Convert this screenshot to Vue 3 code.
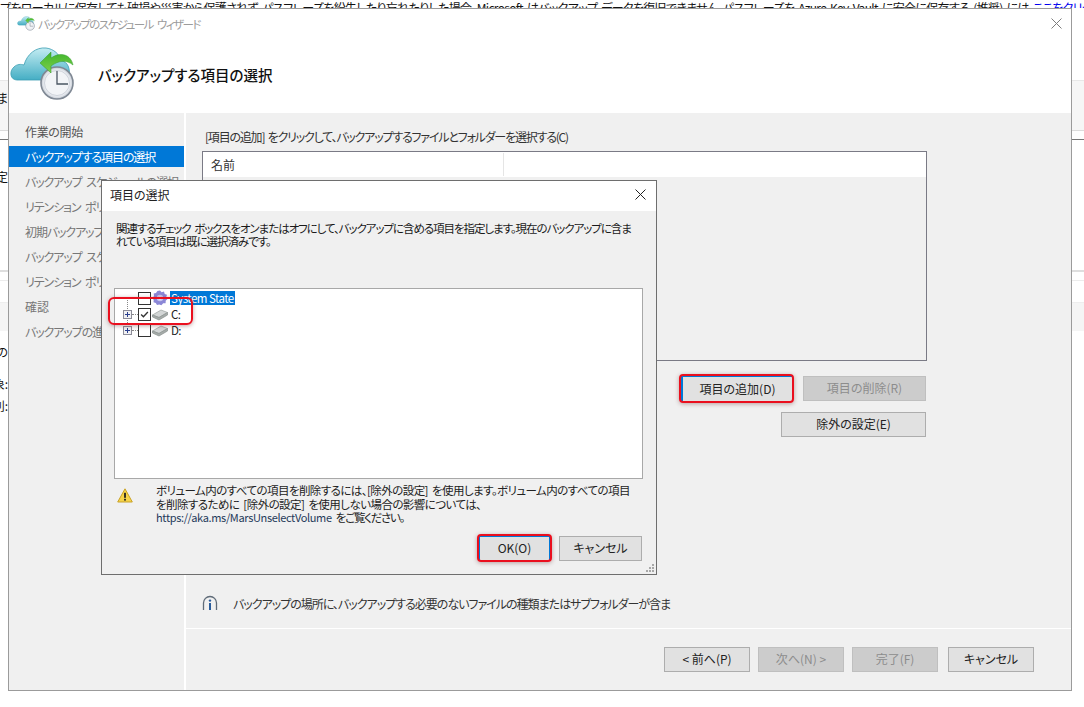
<script setup>
const steps = [
  { label: '作業の開始', tone: 'done' },
  { label: 'バックアップする項目の選択', tone: 'active' },
  { label: 'バックアップ スケジュールの選択', tone: '' },
  { label: 'リテンション ポリシーの選択', tone: '' },
  { label: '初期バックアップの種類', tone: '' },
  { label: 'バックアップ スケジュール', tone: '' },
  { label: 'リテンション ポリシー', tone: '' },
  { label: '確認', tone: 'plain' },
  { label: 'バックアップの進行状況', tone: '' }
]
const rows = [
  { label: 'System State', kind: 'gear', expand: false, checked: false, selected: true },
  { label: 'C:', kind: 'drive', expand: true, checked: true, selected: false },
  { label: 'D:', kind: 'drive', expand: true, checked: false, selected: false }
]
</script>

<template>
  <div class="screen">
    <svg class="defs" width="0" height="0" aria-hidden="true">
      <defs>
        <linearGradient id="cloudFill" x1="0" y1="0" x2="0" y2="1">
          <stop offset="0" stop-color="#c3ecf2" />
          <stop offset="1" stop-color="#45aec4" />
        </linearGradient>
        <linearGradient id="arrowFill" x1="0" y1="0" x2="0" y2="1">
          <stop offset="0" stop-color="#3fb52c" />
          <stop offset="1" stop-color="#7fd04a" />
        </linearGradient>
        <radialGradient id="clockFace" cx="0.5" cy="0.5" r="0.55">
          <stop offset="0" stop-color="#ffffff" />
          <stop offset="0.75" stop-color="#e8ebf0" />
          <stop offset="1" stop-color="#aab2bd" />
        </radialGradient>
        <symbol id="wizardIcon" viewBox="0 0 66 54">
          <path d="M8 33 C1 33 0 24 5 20 C8 17 12 17 15 18 C18 7 27 0 37 1 C45 2 50 7 53 14 C58 15 62 20 60 33 Z" fill="url(#cloudFill)" stroke="#3a9db3" stroke-width="0.8" />
          <circle cx="48" cy="36" r="16" fill="url(#clockFace)" stroke="#7f8894" stroke-width="1.6" />
          <circle cx="48" cy="36" r="12.5" fill="#f2f4f7" stroke="#c6ccd4" stroke-width="0.8" />
          <path d="M48 24 V37 H59" fill="none" stroke="#4a5563" stroke-width="1.3" />
          <path d="M64 18 C62 8 52 4 42 11 V5 L31 16 L42 26 V19 C50 13 58 13 64 18 Z" fill="url(#arrowFill)" stroke="#2f9a26" stroke-width="0.5" />
        </symbol>
      </defs>
    </svg>

    <div class="page">
      <div class="page-notice">
        <span>プをローカルに保存しても破損や災害から保護されず、パスフレーズを紛失したり忘れたりした場合、Microsoft はバックアップ データを復旧できません。パスフレーズを Azure Key Vault に安全に保存する (推奨) には</span> <span class="page-link">ここをクリック</span>
      </div>
      <div class="page-band"><span class="page-cut">しま</span></div>
      <div class="page-rule"></div>
      <div class="page-text-a"><span class="page-cut">設定</span></div>
      <div class="page-light"></div>
      <div class="page-band-b"></div>
      <div class="page-text-b"><span class="page-cut">初回の</span></div>
      <div class="page-text-c"><span class="page-cut">対象:</span></div>
      <div class="page-text-d"><span class="page-cut">除外列:</span></div>
    </div>

    <section class="wizard">
      <header class="wizard-title">
        <svg class="title-icon"><use href="#wizardIcon" /></svg>
        <span>バックアップのスケジュール ウィザード</span>
        <svg class="wizard-close" viewBox="0 0 11 11"><path d="M0.5 0.5 L10.5 10.5 M10.5 0.5 L0.5 10.5" /></svg>
      </header>
      <div class="wizard-head">
        <svg class="head-icon"><use href="#wizardIcon" /></svg>
        <h1>バックアップする項目の選択</h1>
      </div>
      <div class="wizard-body">
        <nav class="steps">
          <div v-for="s in steps" :key="s.label" class="step" :class="s.tone">{{ s.label }}</div>
        </nav>
        <main class="main">
          <div class="main-inner">
            <p class="prompt">[項目の追加] をクリックして、バックアップするファイルとフォルダーを選択する(C)</p>
            <div class="list">
              <div class="list-head">
                <div class="col-name">名前</div>
                <div class="col-rest"></div>
              </div>
            </div>
            <div class="btn-row first">
              <button class="btn focus add">項目の追加(D)</button>
              <button class="btn off remove">項目の削除(R)</button>
            </div>
            <div class="btn-row second">
              <button class="btn exclude">除外の設定(E)</button>
            </div>
            <div class="info">
              <svg class="info-icon" viewBox="0 0 16 16">
                <path d="M1.5 15 V8 A6.5 6.5 0 0 1 14.5 8 V15" fill="none" stroke="#5f6b78" stroke-width="1.3" />
                <circle cx="8" cy="5.6" r="1.2" fill="#2a5d9c" />
                <rect x="7" y="8" width="2" height="7" fill="#2a5d9c" />
              </svg>
              <span>バックアップの場所に、バックアップする必要のないファイルの種類またはサブフォルダーが含ま</span>
            </div>
          </div>
          <footer class="foot">
            <button class="btn nav">&lt; 前へ(P)</button>
            <button class="btn nav off">次へ(N) &gt;</button>
            <button class="btn nav off">完了(F)</button>
            <button class="btn nav cancel">キャンセル</button>
          </footer>
        </main>
      </div>
    </section>

    <section class="dialog">
      <header class="dialog-title">
        <span>項目の選択</span>
        <svg class="dialog-close" viewBox="0 0 11 11"><path d="M0.5 0.5 L10.5 10.5 M10.5 0.5 L0.5 10.5" /></svg>
      </header>
      <div class="dialog-body">
        <p class="dialog-text">関連するチェック ボックスをオンまたはオフにして、バックアップに含める項目を指定します。現在のバックアップに含ま<br />れている項目は既に選択済みです。</p>
        <div class="tree">
          <span class="tree-line"></span>
          <div v-for="r in rows" :key="r.label" class="tree-row">
            <span class="expander">
              <svg v-if="r.expand" viewBox="0 0 9 9"><rect x="0.5" y="0.5" width="8" height="8" fill="#f1f1f4" stroke="#8c8c98" /><path d="M2 4.5 H7 M4.5 2 V7" stroke="#2a3f8f" /></svg>
              <span v-else class="stub"></span>
            </span>
            <span class="dots"></span>
            <span class="check">
              <svg v-if="r.checked" viewBox="0 0 13 13"><path d="M2.5 6.5 L5.2 9.2 L10.5 3.5" fill="none" stroke="#333" stroke-width="1.6" /></svg>
            </span>
            <svg v-if="r.kind === 'gear'" class="row-icon" viewBox="0 0 16 16">
              <path d="M8 .5 L9.6 2.2 L12 1.6 L12.7 3.9 L15 4.8 L14.2 7.2 L15.5 9 L13.7 10.8 L13.6 13.2 L11.2 13.3 L9.4 15.2 L7.2 14.4 L5 15 L3.8 12.9 L1.5 12.3 L1.7 9.9 L.5 8 L2 6 L1.7 3.6 L4 3 L5.4 1 Z" fill="#8b87d6" />
              <circle cx="8" cy="8" r="3.2" fill="#c8c7ee" />
              <circle cx="8" cy="8" r="1.6" fill="#f3f3fb" />
            </svg>
            <svg v-else class="row-icon" viewBox="0 0 16 16">
              <path d="M0.5 9 L9 4 L15.5 6.5 L7 11.5 Z" fill="#d3d6d6" stroke="#9aa09e" stroke-width="0.7" />
              <path d="M0.5 9 V11 L7 14 L15.5 9 V6.5 L7 11.5 Z" fill="#a6acaa" stroke="#8a908e" stroke-width="0.7" />
            </svg>
            <span class="row-label" :class="{ selected: r.selected }">{{ r.label }}</span>
          </div>
        </div>
        <div class="warning">
          <svg class="warn-icon" viewBox="0 0 16 15">
            <path d="M8 0.8 L15.3 14 H0.7 Z" fill="#f6d44a" stroke="#c9a227" stroke-linejoin="round" />
            <rect x="7.1" y="4.8" width="1.8" height="5" fill="#222" />
            <rect x="7.1" y="10.8" width="1.8" height="1.8" fill="#222" />
          </svg>
          <p>ボリューム内のすべての項目を削除するには、[除外の設定] を使用します。ボリューム内のすべての項目<br />を削除するために [除外の設定] を使用しない場合の影響については、<br /><span class="url">https://aka.ms/MarsUnselectVolume</span> <span class="tail">をご覧ください。</span></p>
        </div>
        <div class="dialog-actions">
          <button class="btn focus ok">OK(O)</button>
          <button class="btn dialog-cancel">キャンセル</button>
        </div>
        <svg class="grip" viewBox="0 0 10 10">
          <g fill="#a8a8a8"><rect x="7" y="1" width="2" height="2" /><rect x="4" y="4" width="2" height="2" /><rect x="7" y="4" width="2" height="2" /><rect x="1" y="7" width="2" height="2" /><rect x="4" y="7" width="2" height="2" /><rect x="7" y="7" width="2" height="2" /></g>
        </svg>
      </div>
    </section>

    <div class="mark mark-tree"></div>
    <div class="mark mark-add"></div>
    <div class="mark mark-ok"></div>
  </div>
</template>

<style>
html, body { margin: 0; background: #fff; }
</style>

<style scoped>
.screen {
  position: relative;
  width: 1084px;
  height: 707px;
  overflow: hidden;
  background: #fff;
  font-family: "Noto Sans CJK JP", "Noto Sans", sans-serif;
  font-feature-settings: "palt";
  font-size: 12px;
  color: #1a1a1a;
}
.defs { position: absolute; }
p, h1 { margin: 0; }

/* page behind the wizard */
.page { display: flex; flex-direction: column; width: 100%; }
.page-notice {
  height: 8px;
  overflow: hidden;
  white-space: nowrap;
  line-height: 16px;
  font-size: 12px;
  letter-spacing: -0.68px;
  word-spacing: 2px;
  color: #111;
}
.page-link { color: #0000ee; text-decoration: underline; }
.page-band {
  height: 51px;
  margin-top: 72px;
  background: #f6f6f6;
  border-top: 1px solid #e8e8e8;
  border-bottom: 1px solid #dcdcdc;
  box-sizing: border-box;
  padding-top: 9px;
}
.page-cut { display: flex; justify-content: flex-end; line-height: 16px; width: 8px; white-space: nowrap; color: #111; }
.page-rule { height: 1px; margin-top: 8px; background: #777; }
.page-text-a { height: 132px; padding-top: 29px; box-sizing: border-box; border-bottom: 2px solid #dedede; }
.page-light { height: 1px; margin-top: 8px; background: #ececec; }
.page-band-b { height: 29px; margin-top: 21px; background: #f5f5f5; border-top: 1px solid #eee; box-sizing: border-box; }
.page-text-b { margin-top: 13px; height: 16px; }
.page-text-c { margin-top: 16px; height: 16px; }
.page-text-d { margin-top: 6px; height: 16px; }

/* wizard window */
.wizard {
  position: absolute;
  left: 8px;
  top: 8px;
  width: 1064px;
  height: 683px;
  box-sizing: border-box;
  border: 1px solid #9b9b9b;
  background: #fff;
  display: flex;
  flex-direction: column;
}
.wizard-title {
  height: 29px;
  flex: none;
  display: flex;
  align-items: center;
  padding: 0 9px 0 8px;
  color: #9c9c9c;
  font-size: 11.5px;
  letter-spacing: -1.55px;
  word-spacing: 3px;
}
.title-icon { width: 18px; height: 15px; margin-right: 3px; flex: none; }
.wizard-close { width: 11px; height: 11px; margin-left: auto; margin-right: 0; fill: none; stroke: #7d7d7d; stroke-width: 1; }
.wizard-head {
  height: 75px;
  flex: none;
  display: flex;
  align-items: center;
}
.head-icon { width: 66px; height: 54px; flex: none; margin-top: -3px; }
.wizard-head h1 {
  margin-left: 23px;
  font-size: 14.5px;
  font-weight: 500;
  color: #111;
  margin-top: -3px;
}
.wizard-body { flex: 1; display: flex; min-height: 0; }
.steps {
  width: 175px;
  flex: none;
  background: #f0f0f0;
  margin-right: 2px;
  padding-top: 6px;
  box-sizing: border-box;
  overflow: hidden;
}
.step {
  height: 25px;
  line-height: 25px;
  padding-left: 16px;
  color: #777;
  white-space: nowrap;
  letter-spacing: -1.1px;
  word-spacing: 3px;
}
.step.done { color: #555; letter-spacing: -0.35px; }
.step.plain { letter-spacing: 0; }
.step.active {
  background: #0078d7;
  color: #fff;
  height: 21px;
  line-height: 21px;
  margin: 2px 0;
}
.main {
  flex: 1;
  background: #f0f0f0;
  display: flex;
  flex-direction: column;
  min-width: 0;
}
.main-inner { padding: 16px 0 0 16px; width: 725px; flex: none; }
.prompt { line-height: 16px; padding-left: 3px; color: #333; white-space: nowrap; letter-spacing: -1.2px; word-spacing: 2px; }
.list {
  margin-top: 6px;
  height: 210px;
  box-sizing: border-box;
  border: 1px solid #7a7a85;
  background: #f0f0f0;
}
.list-head { display: flex; height: 25px; background: #fff; }
.col-name { width: 292px; border-right: 1px solid #e5e5e5; padding-left: 8px; margin: 1px 0; line-height: 23px; color: #333; }
.col-rest { flex: 1; }
.btn {
  display: block;
  box-sizing: border-box;
  border: 1px solid #adadad;
  background: #e1e1e1;
  padding: 0 0 2px;
  font: inherit;
  font-feature-settings: inherit;
  color: #222;
  text-align: center;
  white-space: nowrap;
}
.btn.off { background: #ccc; border-color: #bfbfbf; color: #8c8c8c; }
.btn.focus { border: 1px solid #0078d7; border-left-width: 2px; }
.btn-row { display: flex; justify-content: flex-end; padding-right: 1px; }
.btn-row.first { margin-top: 15px; gap: 10px; }
.btn-row.second { margin-top: 10px; }
.add { width: 112px; height: 26px; }
.remove { width: 123px; height: 25px; }
.exclude { width: 145px; height: 25px; }
.info {
  margin-top: 157px;
  height: 18px;
  display: flex;
  align-items: center;
  gap: 15px;
  color: #333;
  white-space: nowrap;
}
.info-icon { width: 16px; height: 16px; flex: none; }
.info span { display: block; letter-spacing: -1px; }
.foot {
  margin-top: 16px;
  border-top: 1px solid #fff;
  padding: 18px 37px 0 0;
  display: flex;
  justify-content: flex-end;
  gap: 8px;
}
.nav { width: 86px; height: 25px; }
.nav.cancel { margin-left: 2px; }

/* item selection dialog */
.dialog {
  position: absolute;
  left: 101px;
  top: 180px;
  width: 556px;
  height: 395px;
  box-sizing: border-box;
  border: 1px solid #6e6e6e;
  background: #f0f0f0;
  display: flex;
  flex-direction: column;
}
.dialog-title {
  height: 30px;
  flex: none;
  box-sizing: border-box;
  padding: 0 10px 3px 8px;
  background: #fff;
  display: flex;
  align-items: center;
  color: #222;
}
.dialog-close { width: 11px; height: 11px; margin-left: auto; margin-right: 0; fill: none; stroke: #222; stroke-width: 1; }
.dialog-body { position: relative; flex: 1; padding: 11px 12px 0; min-height: 0; }
.dialog-text { padding: 0 0 0 2px; line-height: 13px; height: 26px; color: #1a1a1a; font-size: 11.5px; letter-spacing: -1.05px; word-spacing: 2px; white-space: nowrap; }
.tree {
  position: relative;
  margin-top: 40px;
  height: 191px;
  width: 529px;
  box-sizing: border-box;
  border: 1px solid #a8a8a8;
  background: #fff;
  padding-top: 1px;
}
.tree-line { position: absolute; left: 12px; top: 8px; height: 30px; border-left: 1px dotted #888; }
.tree-row { display: flex; align-items: center; height: 16px; padding-left: 8px; position: relative; }
.expander { width: 9px; height: 9px; flex: none; position: relative; }
.expander svg { display: block; width: 9px; height: 9px; position: relative; }
.stub { position: absolute; left: 4px; right: 0; top: 4px; border-top: 1px dotted #888; }
.dots { width: 6px; flex: none; border-top: 1px dotted #888; }
.check {
  width: 13px;
  height: 13px;
  flex: none;
  box-sizing: border-box;
  border: 1px solid #333;
  background: #fff;
}
.check svg { display: block; width: 11px; height: 11px; }
.row-icon { width: 16px; height: 16px; flex: none; margin-left: 1px; }
.row-label { margin-left: 2px; padding: 0 1px; line-height: 14px; color: #222; font-size: 11.5px; letter-spacing: -0.55px; }
.row-label.selected { background: #0078d7; color: #fff; }
.warning { display: flex; margin-top: 5px; padding-left: 3px; }
.warn-icon { width: 16px; height: 15px; flex: none; margin-top: 4px; }
.warning p { margin-left: 23px; line-height: 13.5px; font-size: 11.5px; letter-spacing: -0.56px; word-spacing: 2px; color: #222; white-space: nowrap; }
.url { color: #1f3a5a; font-size: 11px; letter-spacing: -0.35px; }
.tail { letter-spacing: -1.3px; }
.dialog-actions { display: flex; justify-content: flex-end; gap: 9px; margin-top: 11px; padding-right: 2px; }
.ok { width: 72px; height: 25px; }
.dialog-cancel { width: 83px; height: 25px; }
.grip { position: absolute; right: 1px; bottom: 1px; width: 10px; height: 10px; }

/* red annotations */
.mark {
  position: absolute;
  box-sizing: border-box;
  border: 2px solid #ea0f1e;
  border-radius: 4px;
  box-shadow: 0 1px 4px rgba(120, 60, 60, 0.45);
  pointer-events: none;
}
.mark-tree { left: 108px; top: 297px; width: 85px; height: 28px; border-radius: 6px; }
.mark-add { left: 679px; top: 374px; width: 115px; height: 29px; }
.mark-ok { left: 477px; top: 534px; width: 75px; height: 28px; }
</style>
